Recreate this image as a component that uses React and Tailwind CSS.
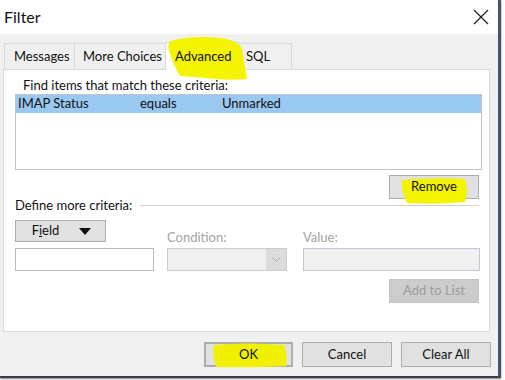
import React from "react";

const font = { fontFamily: 'Lato, "Open Sans", sans-serif' };

function Btn({ children, className = "" }) {
  return (
    <div
      className={
        "relative flex items-center justify-center border border-[#adadad] bg-[#e1e1e1] text-[13px] text-[#111] " +
        className
      }
    >
      {children}
    </div>
  );
}

function Tab({ children, selected, className = "" }) {
  return (
    <div
      className={
        "relative flex items-center border border-[#d9d9d9] border-b-0 text-[13px] text-[#111] " +
        (selected ? "h-[28px] bg-white z-10 -mb-px" : "h-[26px] bg-[#f0f0f0]") +
        " " +
        className
      }
    >
      {children}
    </div>
  );
}

export default function App() {
  return (
    <div className="relative w-[505px] h-[380px] bg-white overflow-hidden" style={font}>
      <div className="flex h-[378px] w-[501px] flex-col border-r-[3px] border-b-2 border-r-[#3e5676] border-b-[#3a3f47] shadow-[0_1px_2px_rgba(0,0,0,0.5)]">
        {/* Title bar */}
        <div className="flex h-[34px] items-center justify-between bg-white pl-[4px] pr-[9px]">
          <span className="text-[16px] text-[#111]">Filter</span>
          <svg width="16" height="16" viewBox="0 0 16 16">
            <path d="M1 1 L15 15 M15 1 L1 15" stroke="#222" strokeWidth="1.3" />
          </svg>
        </div>
        {/* Body */}
        <div className="flex flex-1 flex-col bg-[#f0f0f0] pl-[3px] pt-[8px]">
          {/* Tabs */}
          <div className="flex items-end pl-[1px]">
            <Tab className="w-[71px] pl-[9px]">Messages</Tab>
            <Tab className="w-[91px] pl-[8px] border-l-0">More Choices</Tab>
            <Tab selected className="w-[74px] pl-[9px] border-l-0">
              <svg
                width="82"
                height="46"
                viewBox="0 0 82 46"
                className="absolute left-[0px] top-[-8px] z-20"
              >
                <path
                  d="M4 6 Q28 0 54 3 Q72 5 76 14 L81 44 Q60 46 40 43 L14 41 Q7 30 2 12 Z"
                  fill="#f4f400"
                />
              </svg>
              <span className="relative z-30">Advanced</span>
            </Tab>
            <Tab className="w-[52px] pl-[6px] border-l-0">
              <span className="relative z-30">SQL</span>
            </Tab>
          </div>
          {/* Panel */}
          <div className="flex h-[263px] w-[487px] flex-col border border-[#d9d9d9] bg-white pl-[11px] pr-[7px]">
            <div className="mt-[7px] pl-[8px] text-[13px] leading-[16px] text-[#111]">
              Find items that match these criteria:
            </div>
            <div className="mt-[1px] h-[76px] w-[467px] border border-[#c4c4c4] bg-white">
              <div className="flex h-[18px] items-center bg-[#99c8f0] text-[13px] text-[#111]">
                <span className="w-[124px] pl-[2px]">IMAP Status</span>
                <span className="w-[82px]">equals</span>
                <span>Unmarked</span>
              </div>
            </div>
            <div className="mt-[5px] flex justify-end pr-[3px]">
              <Btn className="h-[24px] w-[90px]">
                <svg width="70" height="28" viewBox="0 0 70 28" className="absolute left-[9px] top-[1px]">
                  <path d="M3 3 Q30 0 66 2 Q70 14 66 25 Q40 28 8 26 Q2 14 3 3 Z" fill="#f4f400" />
                </svg>
                <span className="relative">Remove</span>
              </Btn>
            </div>
            <div className="mt-[-2px] flex items-center">
              <span className="text-[13px] leading-[16px] text-[#111]">Define more criteria:</span>
              <div className="ml-[8px] mr-[3px] h-px flex-1 bg-[#d0d0d0]" />
            </div>
            <div className="mt-[7px] grid grid-cols-[152px_136px_177px]">
              <Btn className="h-[22px] w-[91px] pl-[2px]">
                <span>
                  F<span className="underline">i</span>eld
                </span>
                <svg width="12" height="7" viewBox="0 0 12 7" className="ml-[20px]">
                  <path d="M0 0 H12 L6 7 Z" fill="#111" />
                </svg>
              </Btn>
              <span className="-mb-[3px] self-end text-[13px] leading-[16px] text-[#a3a3a3]">Condition:</span>
              <span className="-mb-[3px] self-end text-[13px] leading-[16px] text-[#a3a3a3]">Value:</span>
              <div className="mt-[6px] h-[23px] w-[139px] border border-[#b9b9b9] bg-white" />
              <div className="mt-[6px] flex h-[23px] w-[120px] border border-[#cccccc] bg-[#f0f0f0]">
                <div className="flex-1" />
                <div className="flex w-[20px] items-center justify-center bg-[#dcdcdc]">
                  <svg width="9" height="5" viewBox="0 0 9 5">
                    <path d="M0.5 0.5 L4.5 4.5 L8.5 0.5" stroke="#b0b0b0" fill="none" strokeWidth="1" />
                  </svg>
                </div>
              </div>
              <div className="mt-[6px] h-[23px] w-[177px] border border-[#c0c9d3] bg-[#f0f0f0]" />
            </div>
            <div className="mt-[8px] flex justify-end pr-[3px]">
              <div className="flex h-[24px] w-[90px] items-center justify-center border border-[#c4c4c4] bg-[#cccccc] text-[13px] text-[#9c9c9c]">
                Add to List
              </div>
            </div>
          </div>
          {/* Bottom buttons */}
          <div className="mt-[10px] flex gap-[9px] pl-[201px]">
            <Btn className="h-[25px] w-[89px] border-2 border-[#0078d7]">
              <svg width="76" height="25" viewBox="0 0 76 25" className="absolute left-[6px] top-[-1px]">
                <path d="M2 2 Q36 -1 72 2 Q76 12 74 23 Q40 25 4 24 Q0 12 2 2 Z" fill="#f0f000" />
              </svg>
              <span className="relative">OK</span>
            </Btn>
            <Btn className="h-[25px] w-[90px]">Cancel</Btn>
            <Btn className="h-[25px] w-[90px]">Clear All</Btn>
          </div>
        </div>
      </div>
    </div>
  );
}
